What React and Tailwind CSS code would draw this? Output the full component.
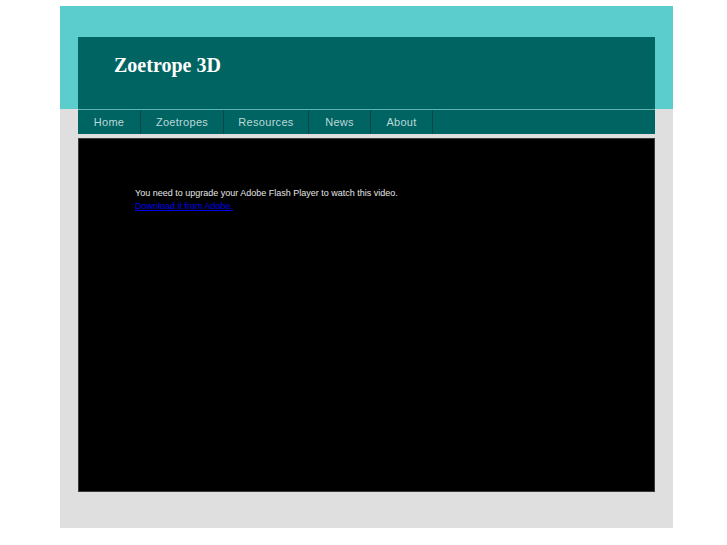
export default function App() {
  const nav = [
    { label: "Home", w: "w-[63px]" },
    { label: "Zoetropes", w: "w-[83px]" },
    { label: "Resources", w: "w-[85px]" },
    { label: "News", w: "w-[62px]" },
    { label: "About", w: "w-[62px]" },
  ];
  return (
    <div className="min-h-[545px] bg-white pt-[6px] pl-[60px]">
      <div className="w-[613px] bg-[linear-gradient(to_bottom,#5ccdcd_103px,#dfdfdf_103px)] pt-[31px] px-[18px] pb-[36px]">
        <div className="h-[72px] bg-[#006462] flex items-start pl-[36px] pt-[14px]">
          <h1 className="text-white font-bold text-[20px] leading-[28px] font-['Liberation_Serif',serif]">
            Zoetrope 3D
          </h1>
        </div>
        <div className="h-px bg-[#5fb3b0]" />
        <nav className="h-[24px] bg-[#006462] flex font-['Liberation_Sans',Arial,sans-serif]">
          {nav.map((n) => (
            <a
              key={n.label}
              className={`${n.w} h-full flex items-center justify-center text-[11px] tracking-[0.3px] text-[#bcd9d8] border-r border-[#0e4543]`}
            >
              {n.label}
            </a>
          ))}
        </nav>
        <div className="mt-[4px] h-[354px] bg-black border border-[#3a3a3a] pt-[48px] pl-[56px] font-['Liberation_Sans',Arial,sans-serif] text-[9px] leading-[13px]">
          <p className="text-[#e6e6e6]">
            You need to upgrade your Adobe Flash Player to watch this video.
          </p>
          <a className="text-[#0000ee] underline">Download it from Adobe.</a>
        </div>
      </div>
    </div>
  );
}
